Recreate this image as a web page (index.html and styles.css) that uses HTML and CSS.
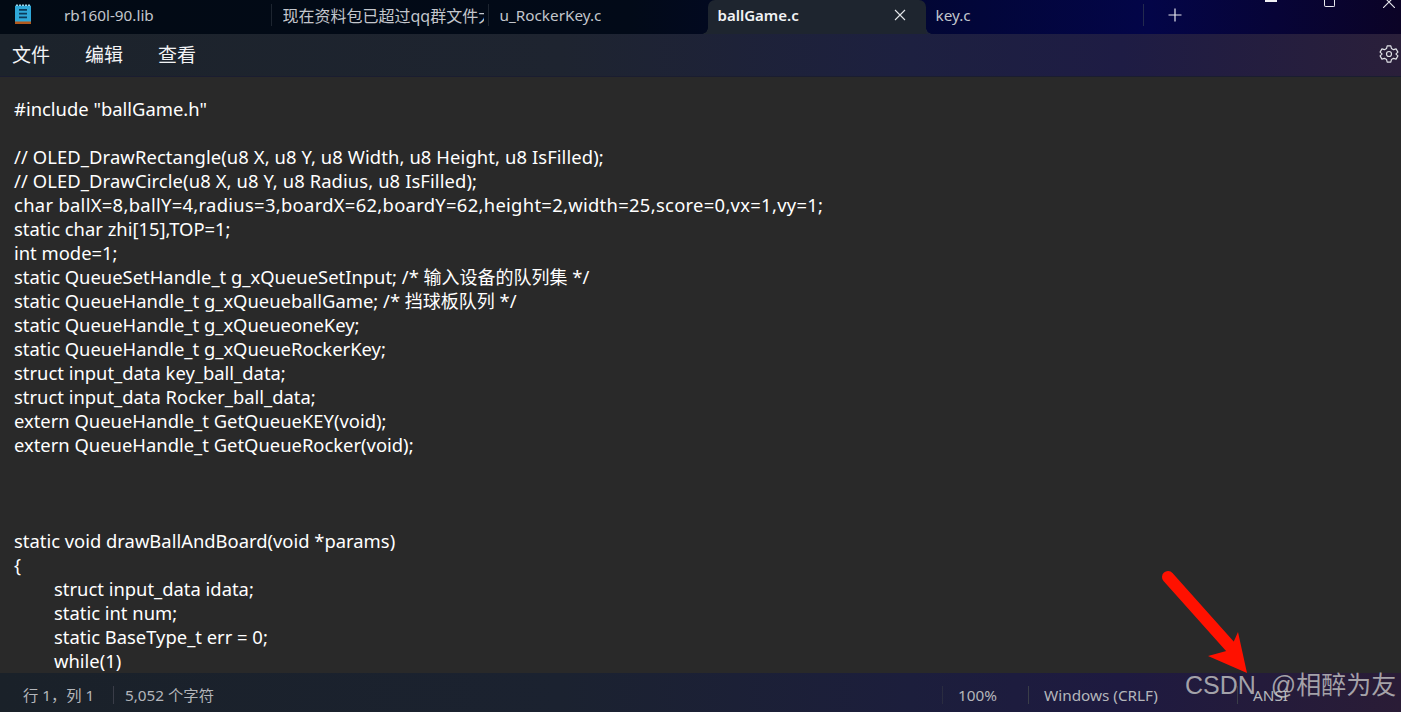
FILE: index.html
```html
<!DOCTYPE html>
<html lang="zh">
<head>
<meta charset="utf-8">
<title>ballGame.c - 记事本</title>
<link rel="stylesheet" href="styles.css">
</head>
<body>
<div class="app">
  <header class="tabbar">
    <div class="app-icon">
      <svg width="16" height="20" viewBox="0 0 16 24" preserveAspectRatio="none">
        <rect x="0" y="2" width="16" height="20" fill="#2fa8d8"/>
        <rect x="0" y="21" width="16" height="3" fill="#b3591c"/>
        <path d="M1 1.500h14" stroke="#9ad4ea" stroke-width="2" stroke-dasharray="2 1"/>
        <path d="M4 7h8M4 11.500h8M4 16h8" stroke="#0c3b5a" stroke-width="2"/>
      </svg>
    </div>
    <div class="tab tab-first"><span class="tab-label">rb160l-90.lib</span></div>
    <div class="tab tab-second"><span class="tab-label">现在资料包已超过qq群文件大小限制</span></div>
    <div class="tab tab-third"><span class="tab-label">u_RockerKey.c</span></div>
    <div class="tab tab-active">
      <span class="tab-label">ballGame.c</span>
      <svg class="tab-close" width="12" height="12" viewBox="0 0 12 12"><path d="M1 1l10 10M11 1L1 11" stroke="#e4e6ea" stroke-width="1.100" fill="none"/></svg>
    </div>
    <div class="tab tab-last"><span class="tab-label">key.c</span></div>
    <svg class="tab-add" width="14" height="14" viewBox="0 0 14 14"><path d="M7 .5v13M.5 7h13" stroke="#e8e8ee" stroke-width="1.200" fill="none"/></svg>
    <div class="window-controls">
      <span class="win-min"></span>
      <span class="win-max"></span>
      <svg class="win-close" width="12" height="8" viewBox="0 0 12 8"><path d="M0 8L12 -4M0 -4L12 8" stroke="#e8e8ee" stroke-width="1.100" fill="none"/></svg>
    </div>
  </header>

  <nav class="menubar">
    <span class="menu-item">文件</span>
    <span class="menu-item">编辑</span>
    <span class="menu-item">查看</span>
    <svg class="settings" width="20" height="20" viewBox="0 0 24 24" fill="none" stroke="#dfe1e6" stroke-width="1.400" stroke-linejoin="round">
      <circle cx="12" cy="12" r="3"/>
      <path d="M9.800 2.300h4.400l.7 3 2.600 1.500 3-.9 2.200 3.800-2.300 2.100v.4l2.300 2.100-2.200 3.800-3-.9-2.600 1.500-.7 3H9.800l-.7-3-2.600-1.500-3 .9-2.200-3.800 2.300-2.100v-.4L1.300 9.700l2.200-3.800 3 .9 2.600-1.500z"/>
    </svg>
  </nav>

  <main class="editor">
    <div class="line">#include "ballGame.h"</div>
    <div class="line">&nbsp;</div>
    <div class="line line-oled">// OLED_DrawRectangle(u8 X, u8 Y, u8 Width, u8 Height, u8 IsFilled);</div>
    <div class="line line-oled">// OLED_DrawCircle(u8 X, u8 Y, u8 Radius, u8 IsFilled);</div>
    <div class="line line-wide">char ballX=8,ballY=4,radius=3,boardX=62,boardY=62,height=2,width=25,score=0,vx=1,vy=1;</div>
    <div class="line">static char zhi[15],TOP=1;</div>
    <div class="line">int mode=1;</div>
    <div class="line">static QueueSetHandle_t g_xQueueSetInput; /* <span class="cjk">输入设备的队列集</span> */</div>
    <div class="line">static QueueHandle_t g_xQueueballGame; /* <span class="cjk">挡球板队列</span> */</div>
    <div class="line">static QueueHandle_t g_xQueueoneKey;</div>
    <div class="line">static QueueHandle_t g_xQueueRockerKey;</div>
    <div class="line">struct input_data key_ball_data;</div>
    <div class="line">struct input_data Rocker_ball_data;</div>
    <div class="line">extern QueueHandle_t GetQueueKEY(void);</div>
    <div class="line">extern QueueHandle_t GetQueueRocker(void);</div>
    <div class="line">&nbsp;</div>
    <div class="line">&nbsp;</div>
    <div class="line">&nbsp;</div>
    <div class="line">static void drawBallAndBoard(void *params)</div>
    <div class="line">{</div>
    <div class="line indent">struct input_data idata;</div>
    <div class="line indent">static int num;</div>
    <div class="line indent">static BaseType_t err = 0;</div>
    <div class="line indent">while(1)</div>
  </main>

  <footer class="statusbar">
    <span class="status-cell cell-pos">行 1，列 1</span>
    <span class="status-cell cell-count">5,052 个字符</span>
    <span class="status-cell cell-zoom">100%</span>
    <span class="status-cell cell-eol">Windows (CRLF)</span>
    <span class="status-cell cell-enc">ANSI</span>
  </footer>

  <svg class="annotation" width="110" height="115" viewBox="0 0 110 115">
    <path d="M9 11L76 86" stroke="#ff1100" stroke-width="12" stroke-linecap="round" fill="none"/>
    <path d="M88 107L49 90 71 84 79 66z" fill="#ff1100"/>
  </svg>
  <div class="watermark">CSDN @相醉为友</div>
</div>
</body>
</html>
```

FILE: styles.css
```css
* { box-sizing: border-box; }
html, body { margin: 0; height: 100%; overflow: hidden; background: #292929; }
.app {
  position: relative;
  width: 1401px;
  height: 712px;
  display: flex;
  flex-direction: column;
  font-family: "Noto Sans", "Noto Sans CJK SC", sans-serif;
  overflow: hidden;
}

.tabbar {
  height: 34px;
  flex: none;
  display: flex;
  align-items: flex-start;
  background: linear-gradient(90deg, #020a14 0%, #020a18 45%, #02063a 70%, #030548 82%, #0b0326 100%);
  font-size: 15.300px;
  color: #c3c6cc;
}
.app-icon { width: 49px; padding: 4px 0 0 15px; display: flex; flex: none; }
.tab { height: 22px; margin-top: 4px; display: flex; align-items: center; flex: none; overflow: hidden; white-space: nowrap; }
.tab-label { display: block; overflow: hidden; }
.tab-first { width: 222.500px; padding-left: 15px; border-right: 1px solid #1d2530; }
.tab-second { width: 217px; padding-left: 11px; border-right: 1px solid #1d2530; font-size: 16px; }
.tab-second .tab-label { width: 201px; }
.tab-third { width: 219px; padding-left: 11px; }
.tab-active {
  position: relative;
  width: 218px;
  height: 34px;
  margin-top: 0;
  padding: 0 20px 4px 10px;
  justify-content: space-between;
  background: #1e252f;
  border-radius: 7px 7px 0 0;
  color: #f2f3f5;
  font-size: 15px;
  font-weight: 600;
  overflow: visible;
}
.tab-active::before, .tab-active::after {
  content: "";
  position: absolute;
  bottom: 0;
  width: 6px;
  height: 6px;
}
.tab-active::before { left: -6px; background: radial-gradient(circle at 0 0, transparent 5.500px, #1e252f 6px); }
.tab-active::after { right: -6px; background: radial-gradient(circle at 100% 0, transparent 5.500px, #1e2436 6px); }
.tab-close { flex: none; }
.tab-last { width: 218px; padding-left: 10px; border-right: 1px solid #232a4e; }
.tab-add { margin: 8px 0 0 24px; flex: none; }
.window-controls { flex: 1; height: 8px; display: flex; align-items: flex-start; padding-left: 83px; }
.win-min { width: 12px; height: 2px; background: #f0f0f4; flex: none; }
.win-max { width: 11px; height: 7px; margin-left: 47px; border: 1px solid #e8e8ee; border-top: 0; border-radius: 0 0 2px 2px; flex: none; }
.win-close { margin-left: 48px; flex: none; }

.menubar {
  height: 43px;
  flex: none;
  display: flex;
  align-items: center;
  padding: 0 2px 2px 12px;
  gap: 35px;
  background: linear-gradient(90deg, #1c232b 0%, #1e2430 40%, #1d2040 65%, #1e1c44 80%, #2a1f3a 100%);
  border-bottom: 1px solid #1a1d30;
  color: #f2f3f5;
  font-size: 19px;
}
.settings { margin-left: auto; }

.editor {
  flex: 1;
  min-height: 0;
  overflow: hidden;
  padding: 20px 0 0 14px;
  background: #292929;
  color: #ffffff;
  font-size: 18.400px;
  line-height: 24px;
}
.line { height: 24px; white-space: pre; }
.line-wide { letter-spacing: .3px; }
.line-oled { letter-spacing: .1px; }
.cjk { font-size: 18px; }
.indent { padding-left: 40px; }

.statusbar {
  height: 39px;
  flex: none;
  display: flex;
  align-items: center;
  padding-top: 5px;
  background: linear-gradient(90deg, #1a2129 0%, #1b2230 40%, #1c1e3c 65%, #1e1a40 80%, #2a1c36 100%);
  color: #b4b6bb;
  font-size: 15.300px;
}
.status-cell { display: block; white-space: nowrap; height: 18px; line-height: 18px; border-right: 1px solid #3a3d48; flex: none; }
.cell-pos { width: 114px; padding-left: 23px; }
.cell-count { width: 829px; padding-left: 11px; border-right: 1px solid #2a2c40; }
.cell-zoom { width: 86px; padding-left: 15px; }
.cell-eol { width: 209px; padding-left: 15px; }
.cell-enc { padding-left: 15px; border-right: 0; }

.annotation { position: absolute; left: 1159px; top: 566px; }
.watermark {
  position: absolute;
  left: 1185px;
  top: 665px;
  font-family: "Liberation Sans", "Noto Sans CJK SC", sans-serif;
  font-size: 25px;
  word-spacing: 8px;
  line-height: 40px;
  color: rgba(200, 200, 200, 0.78);
  white-space: nowrap;
}
```
